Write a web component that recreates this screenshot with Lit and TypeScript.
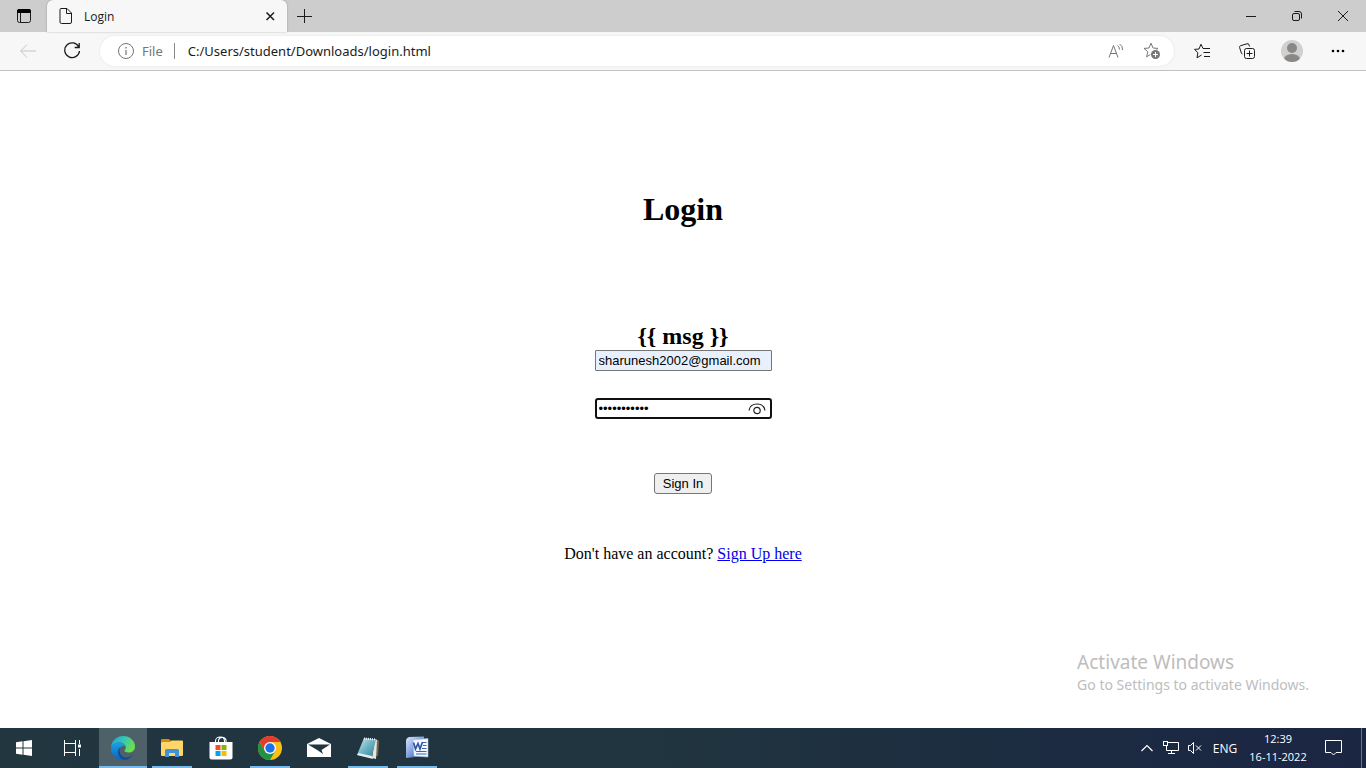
import { LitElement, html, css, svg } from "lit";
import { customElement } from "lit/decorators.js";

const icon = (w: number, h: number, body: unknown) =>
  html`<svg width=${w} height=${h} viewBox="0 0 ${w} ${h}" aria-hidden="true">${body}</svg>`;

const star = "M8 1.2 L10 6 L15 6.4 L11.2 9.7 L12.4 14.8 L8 12.1 L3.6 14.8 L4.8 9.7 L1 6.4 L6 6 Z";

const shared = css`
  * { box-sizing: border-box; }
  svg { display: block; flex: none; }
  button {
    display: flex;
    align-items: center;
    justify-content: center;
    margin: 0;
    padding: 0;
    border: 0;
    background: none;
    color: inherit;
    font: inherit;
  }
  .line { fill: none; stroke: currentColor; stroke-width: 1; }
`;

@customElement("browser-chrome")
class BrowserChrome extends LitElement {
  static styles = [shared, css`
    :host {
      display: block;
      flex: none;
      font-family: "Open Sans", "Noto Sans", sans-serif;
      color: #1b1b1b;
    }
    .tabs {
      display: flex;
      height: 32px;
      background: #cdcdcd;
    }
    .workspace { width: 47px; }
    .tab {
      display: flex;
      align-items: center;
      width: 240px;
      padding: 0 8px 0 11px;
      border-radius: 6px 6px 0 0;
      background: #f7f7f7;
      font-size: 12px;
      box-shadow: 0 0 2px rgba(0, 0, 0, 0.3);
    }
    .title { flex: 1; padding-left: 10px; }
    .close { width: 18px; height: 18px; }
    .add { width: 34px; }
    .window { display: flex; margin-left: auto; }
    .window button { width: 46px; }
    .bar {
      display: flex;
      align-items: center;
      height: 39px;
      padding-right: 6px;
      border-bottom: 1px solid #c2c2c2;
      background: #f7f7f7;
    }
    .nav { width: 44px; height: 32px; }
    .back { margin-left: 6px; color: #c5c5c5; }
    .address {
      display: flex;
      flex: 1;
      align-items: center;
      height: 30px;
      margin: 0 6px;
      padding: 0 4px 0 18px;
      border-radius: 15px;
      background: #fff;
      box-shadow: 0 0 3px rgba(0, 0, 0, 0.08);
      color: #767676;
      font-family: "Noto Sans", "Open Sans", sans-serif;
      font-size: 13px;
    }
    .scheme { padding: 0 11px 0 8px; }
    .rule { width: 1px; height: 16px; background: #8a8a8a; }
    .url {
      flex: 1;
      min-width: 0;
      margin-left: 13px;
      padding: 0;
      border: 0;
      outline: 0;
      background: none;
      color: #1b1b1b;
      font: inherit;
    }
    .inner { width: 36px; height: 28px; }
    .tool { width: 45px; height: 32px; }
  `];

  render() {
    return html`
      <div class="tabs">
        <button class="workspace" aria-label="Tab actions">
          ${icon(16, 16, svg`<rect class="line" x="1.5" y="1.5" width="13" height="13" rx="2"/><path d="M1 5V3a2 2 0 0 1 2-2h10a2 2 0 0 1 2 2v2z"/><path class="line" d="M4.5 5v9.5"/>`)}
        </button>
        <div class="tab">
          ${icon(16, 18, svg`<path class="line" stroke-linejoin="round" d="M3 1.5h6l4.5 4.5v9a1.5 1.5 0 0 1-1.5 1.5H3.5A1.5 1.5 0 0 1 2 15V2.5a1 1 0 0 1 1-1zM8.5 1.5V6.5h5"/>`)}
          <span class="title">Login</span>
          <button class="close" aria-label="Close tab">
            ${icon(10, 10, svg`<path d="M1.500 1.500l7.500 7.500M9 1.500L1.500 9" fill="none" stroke="currentColor" stroke-width="1.500"/>`)}
          </button>
        </div>
        <button class="add" aria-label="New tab">
          ${icon(16, 16, svg`<path class="line" d="M8.5 1v14M1 8.5h15"/>`)}
        </button>
        <div class="window">
          <button aria-label="Minimize">${icon(10, 10, svg`<path class="line" d="M0 5.5h10"/>`)}</button>
          <button aria-label="Restore">
            ${icon(10, 10, svg`<rect class="line" x=".5" y="2.5" width="7" height="7" rx="1.5"/><path class="line" d="M2.5 .5h4.500a2.500 2.500 0 0 1 2.500 2.500v4.500"/>`)}
          </button>
          <button aria-label="Close">${icon(10, 10, svg`<path class="line" d="M0 0l10 10M10 0L0 10"/>`)}</button>
        </div>
      </div>
      <div class="bar">
        <button class="nav back" aria-label="Back">
          ${icon(16, 14, svg`<path class="line" d="M7 .5L.7 7 7 13.5M.7 7H16"/>`)}
        </button>
        <button class="nav" aria-label="Refresh">
          ${icon(18, 18, svg`<path d="M15.8 5A7.4 7.4 0 1 0 16.5 9M16.2 1v4.5h-4.5" fill="none" stroke="currentColor" stroke-width="1.3"/>`)}
        </button>
        <div class="address">
          ${icon(16, 16, svg`<circle class="line" cx="8" cy="8" r="7.5"/><path d="M7.4 7h1.2v5H7.4zM7.3 4h1.4v1.4H7.3z" fill="currentColor"/>`)}
          <span class="scheme">File</span>
          <span class="rule"></span>
          <input class="url" aria-label="Address" value="C:/Users/student/Downloads/login.html" />
          <button class="inner" aria-label="Read aloud">
            ${icon(16, 16, svg`<path class="line" d="M1 14.5L5.5 2.5 10 14.5M2.600 10.5h5.800M9.500 2.500q2 1.500 2 4M11.500 1q3.500 2 3 6"/>`)}
          </button>
          <button class="inner" aria-label="Add to favorites">
            ${icon(18, 18, svg`<path class="line" stroke-linejoin="round" d=${star}/><circle cx="12.5" cy="12.5" r="5" fill="#fff"/><circle cx="12.5" cy="12.5" r="4.5" fill="#767676"/><path d="M12.5 10v5M10 12.5h5" stroke="#fff"/>`)}
          </button>
        </div>
        <button class="tool" aria-label="Favorites">
          ${icon(18, 16, svg`<path class="line" stroke-linejoin="round" d="M7.500 12L3 14.800 3.900 9.700 .5 6.400 5 6 7 1.200 9 5.500H16M9.500 9.500h6.500M10 13.500h6"/>`)}
        </button>
        <button class="tool" aria-label="Collections">
          ${icon(18, 16, svg`<path class="line" d="M3.500 11L2.500 10.500 .6 4.500A1.500 1.500 0 0 1 1.600 2.700L8 .8A1.500 1.500 0 0 1 10 2L10.500 3.500"/><rect class="line" x="5.500" y="5.500" width="10" height="10" rx="2"/><path class="line" d="M10.500 7.500v6M7.500 10.500h6"/>`)}
        </button>
        <button class="tool" aria-label="Profile">
          ${icon(24, 22, svg`<clipPath id="avatar"><circle cx="11" cy="11" r="11"/></clipPath><g clip-path="url(#avatar)"><rect width="22" height="22" fill="#d2d0ce"/><circle cx="11" cy="8" r="5" fill="#8a8886"/><ellipse cx="11" cy="19.5" rx="8" ry="5.5" fill="#8a8886"/></g>`)}
        </button>
        <button class="tool" aria-label="Settings and more">
          ${icon(14, 4, svg`<circle cx="2" cy="2" r="1.3"/><circle cx="7" cy="2" r="1.3"/><circle cx="12" cy="2" r="1.3"/>`)}
        </button>
      </div>
    `;
  }
}

@customElement("login-page")
class LoginPage extends LitElement {
  static styles = css`
    * { box-sizing: border-box; }
    :host {
      position: relative;
      display: block;
      flex: 1;
      min-height: 0;
      background: #fff;
      color: #000;
      font-family: "Liberation Serif", serif;
    }
    .form {
      display: flex;
      flex-direction: column;
      align-items: center;
      padding-top: 120px;
    }
    h1 { margin: 0 0 96px; font-size: 32px; line-height: 36px; }
    h2 { margin: 0; font-size: 24px; line-height: 27px; }
    .field {
      display: flex;
      align-items: center;
      width: 177px;
      height: 21px;
      padding-left: 2px;
      border: 1px solid #767676;
      border-radius: 1px;
    }
    .email { margin-bottom: 27px; background: #e8f0fe; }
    .password {
      margin-bottom: 54px;
      padding: 0 4px 0 1px;
      border: 2px solid #101010;
      border-radius: 3px;
    }
    input {
      flex: 1;
      min-width: 0;
      padding: 0 0 0 1px;
      border: 0;
      outline: 0;
      background: none;
      font: 13px "Liberation Sans", sans-serif;
      color: #000;
    }
    .reveal { padding: 0; border: 0; background: none; }
    .reveal svg { display: block; }
    .submit {
      height: 21px;
      margin-bottom: 51px;
      padding: 0 8px;
      border: 1px solid #767676;
      border-radius: 3px;
      background: #efefef;
      color: #000;
      font: 13px "Liberation Sans", sans-serif;
    }
    p { margin: 0; font-size: 16px; line-height: 18px; }
    a { color: #0000ee; }
    .watermark {
      position: absolute;
      right: 57px;
      bottom: 33px;
      color: #bdbdbd;
      font: 14px/20px "Noto Sans", "Open Sans", sans-serif;
    }
    .headline { font-size: 19px; line-height: 26px; }
  `;

  render() {
    return html`
      <form class="form" @submit=${(e: Event) => e.preventDefault()}>
        <h1>Login</h1>
        <h2>{{ msg }}</h2>
        <div class="field email">
          <input type="email" aria-label="Email" value="sharunesh2002@gmail.com" />
        </div>
        <div class="field password">
          <input type="password" aria-label="Password" value="password123" />
          <button class="reveal" type="button" aria-label="Show password">
            ${icon(18, 14, svg`<path d="M1 8.5Q2 2 9 2t8 6.5" fill="none" stroke="#222" stroke-width="1.2"/><circle cx="9" cy="8.5" r="3.2" fill="none" stroke="#222" stroke-width="1.2"/>`)}
          </button>
        </div>
        <button class="submit" type="submit">Sign In</button>
        <p>Don't have an account? <a href="#signup">Sign Up here</a></p>
      </form>
      <div class="watermark">
        <div class="headline">Activate Windows</div>
        <div>Go to Settings to activate Windows.</div>
      </div>
    `;
  }
}

const apps = [
  { name: "Microsoft Edge", state: "active", art: icon(24, 24, svg`
    <defs>
      <linearGradient id="eg" x1="0" y1="0" x2="1" y2=".4"><stop offset="0" stop-color="#249fd8"/><stop offset=".55" stop-color="#35c8b5"/><stop offset="1" stop-color="#69e04c"/></linearGradient>
      <linearGradient id="eb" x1="0" y1="0" x2="0" y2="1"><stop offset="0" stop-color="#1aa1e6"/><stop offset="1" stop-color="#0c62bd"/></linearGradient>
    </defs>
    <path d="M0 11C1 4 6 0 12 0c7 0 12 5 12 10.5 0 4-3 6-6.5 6-2.5 0-4-.8-4-1.7s1.3-1.3 1.300-3.300C14.800 9 12 6.500 8.500 6.500 4 6.500 1 9 0 11z" fill="url(#eg)"/>
    <path d="M0 12C.5 8 4 6 8.5 6.500c3 .3 5.300 2 6 4C13 9.500 9 10 8.500 14.500c-.4 4.500 3 8.500 7 8.800C13 24.500 8 24.300 5 21.800 1.500 19.200-.2 16 0 12z" fill="url(#eb)"/>
    <path d="M9.5 11C8 13 8 17 11 20c3 2.500 8 2 11.300-2-1.500 3-4 5-7 5.700-4 .5-8.500-3-8.300-8C7 13.500 8 12 9.500 11z" fill="#124a95"/>`) },
  { name: "File Explorer", state: "open", art: icon(22, 20, svg`
    <path d="M0 2a1 1 0 0 1 1-1h7l2 2v3H0z" fill="#d88d05"/><path d="M1 4h8l1.500-1.500H21a1 1 0 0 1 1 1V17a1 1 0 0 1-1 1H1a1 1 0 0 1-1-1V5z" fill="#ffd667"/><path d="M4 19v-6.500a1.500 1.500 0 0 1 1.500-1.500h11a1.500 1.500 0 0 1 1.500 1.500V19h-4v-4H8v4z" fill="#3f93d7"/>`) },
  { name: "Microsoft Store", state: "", art: icon(24, 24, svg`
    <path d="M6.5 7V5a4.500 4 0 0 1 9 0v2M9.500 7V4a4 4 0 0 1 7.500 0v3" fill="none" stroke="#fff" stroke-width="1.100"/><path d="M.5 6h23V21.500a2 2 0 0 1-2 2h-19a2 2 0 0 1-2-2z" fill="#fff"/><path d="M6.500 9h5v5h-5z" fill="#f25022"/><path d="M12.500 9h5v5h-5z" fill="#7fba00"/><path d="M6.500 15h5v5h-5z" fill="#00a4ef"/><path d="M12.500 15h5v5h-5z" fill="#ffb900"/>`) },
  { name: "Google Chrome", state: "open", art: icon(24, 24, svg`
    <circle cx="12" cy="12" r="12" fill="#fbc116"/><path d="M1.6 6A12 12 0 0 0 12 24l5.200-9L12 12 6.800 15z" fill="#229342"/><path d="M1.600 6A12 12 0 0 1 22.400 6H12L6.800 15z" fill="#e33b2e"/><circle cx="12" cy="12" r="6" fill="#fff"/><circle cx="12" cy="12" r="4.700" fill="#1a73e8"/>`) },
  { name: "Mail", state: "", art: icon(24, 20, svg`
    <path d="M0 6L12 0l12 6v13H0z" fill="#fff"/><path d="M1 6.5h22l-8.500 5.500 1.500 4-5-3.500z" fill="#21363f"/>`) },
  { name: "Notepad", state: "open", art: icon(24, 24, svg`
    <defs><linearGradient id="np" x1="0" y1="0" x2="1" y2="1"><stop offset="0" stop-color="#d6ecf0"/><stop offset=".5" stop-color="#6bb2c3"/><stop offset="1" stop-color="#2d7f96"/></linearGradient></defs>
    <path d="M19 3l4 1.500-1 15-4 2z" fill="#82643e"/><path d="M19 3l2 1-1 19-4-1z" fill="#dfe6e7"/><path d="M8 2l12 1.500L15.500 22 1 19z" fill="url(#np)"/><path d="M1 19l1.500-2L16 20l1 3z" fill="#e4eced"/><path d="M8 2.500l12 1" stroke="#e9f3f4" stroke-width="2" stroke-dasharray="1 1"/>`) },
  { name: "Microsoft Word", state: "open", art: icon(24, 24, svg`
    <defs><linearGradient id="wd" x1="0" y1="0" x2="1" y2="1"><stop offset="0" stop-color="#dce8fb"/><stop offset=".5" stop-color="#7fa0dc"/><stop offset="1" stop-color="#2448a0"/></linearGradient></defs>
    <path d="M4 1L19 .5V20L1 22V5q0-3 3-4z" fill="url(#wd)"/><path d="M8 4l15-1.500V21L9 20z" fill="#f5f8fd" stroke="#a9bde0" stroke-width=".6"/><path d="M8.500 6.500L10.500 13l2.500-5.500L15 13l2.500-7" fill="none" stroke="#2c56ad" stroke-width="1.700"/><path d="M18 6.500h3.500M18 9.500h3.500M17 12.500h4.500M11 15.500h10.500M11 18h10.500" stroke="#3c66b4"/>`) },
];

@customElement("task-bar")
class TaskBar extends LitElement {
  static styles = [shared, css`
    :host {
      display: flex;
      flex: none;
      height: 40px;
      background: linear-gradient(90deg, #21363f, #20343f 50%, #1b2942 85%, #1b2643);
      color: #fff;
      font: 12px "Open Sans", "Noto Sans", sans-serif;
    }
    .system { width: 48px; }
    .apps { display: flex; gap: 1px; margin-left: 3px; }
    .app { position: relative; width: 48px; }
    .active { background: #4e6068; }
    .open::after, .active::after {
      position: absolute;
      right: 4px;
      bottom: 0;
      left: 4px;
      height: 2px;
      background: #76b9ed;
      content: "";
    }
    .active::after { right: 0; left: 0; }
    .tray { display: flex; margin-left: auto; }
    .small { width: 24px; }
    .lang { width: 36px; }
    .clock {
      flex-direction: column;
      width: 70px;
      font-size: 11px;
      line-height: 18px;
    }
    .note { width: 40px; margin-right: 8px; }
    .desktop { width: 5px; border-left: 1px solid #6b7588; }
  `];

  render() {
    return html`
      <button class="system" aria-label="Start">
        ${icon(16, 16, svg`<path d="M0 2.2L6.5 1.300v6.200H0zM7.500 1.200L16 0v7.500H7.500zM0 8.500h6.500v6.200L0 13.800zM7.500 8.500H16V16l-8.500-1.200z" fill="#fff"/>`)}
      </button>
      <button class="system" aria-label="Task view">
        ${icon(17, 16, svg`<path class="line" d="M.5 0v3.500h11V0M.5 16v-3.500h11V16M15.500 0v4M15.500 9v7"/><rect class="line" x=".5" y="3.500" width="11" height="9"/><path d="M14 4.500h3v3h-3z" fill="#fff"/>`)}
      </button>
      <div class="apps">
        ${apps.map((a) => html`<button class="app ${a.state}" aria-label=${a.name}>${a.art}</button>`)}
      </div>
      <div class="tray">
        <button class="small" aria-label="Show hidden icons">
          ${icon(12, 8, svg`<path d="M.5 7L6 1.5 11.5 7" fill="none" stroke="#fff" stroke-width="1.2"/>`)}
        </button>
        <button class="small" aria-label="Network">
          ${icon(16, 14, svg`<path class="line" d="M5 1.5h10.500v8H3.500V5M8.500 9.500v3M5 12.500h7"/><rect class="line" x=".5" y=".5" width="4" height="4"/>`)}
        </button>
        <button class="small" aria-label="Volume muted">
          ${icon(16, 14, svg`<path class="line" d="M1.500 4.500h2L6.500 1.500v11l-3-3h-2zM9 4.500l5 5M14 4.500l-5 5"/>`)}
        </button>
        <button class="lang">ENG</button>
        <button class="clock"><span>12:39</span><span>16-11-2022</span></button>
        <button class="note" aria-label="Notifications">
          ${icon(17, 16, svg`<path class="line" d="M.5 .5h16v12H11L8.500 15 6 12.500H.5z"/>`)}
        </button>
        <button class="desktop" aria-label="Show desktop"></button>
      </div>
    `;
  }
}

@customElement("app-root")
class AppRoot extends LitElement {
  static styles = css`
    :host {
      display: flex;
      flex-direction: column;
      height: 100vh;
      overflow: hidden;
    }
  `;

  render() {
    return html`
      <browser-chrome></browser-chrome>
      <login-page></login-page>
      <task-bar></task-bar>
    `;
  }
}
